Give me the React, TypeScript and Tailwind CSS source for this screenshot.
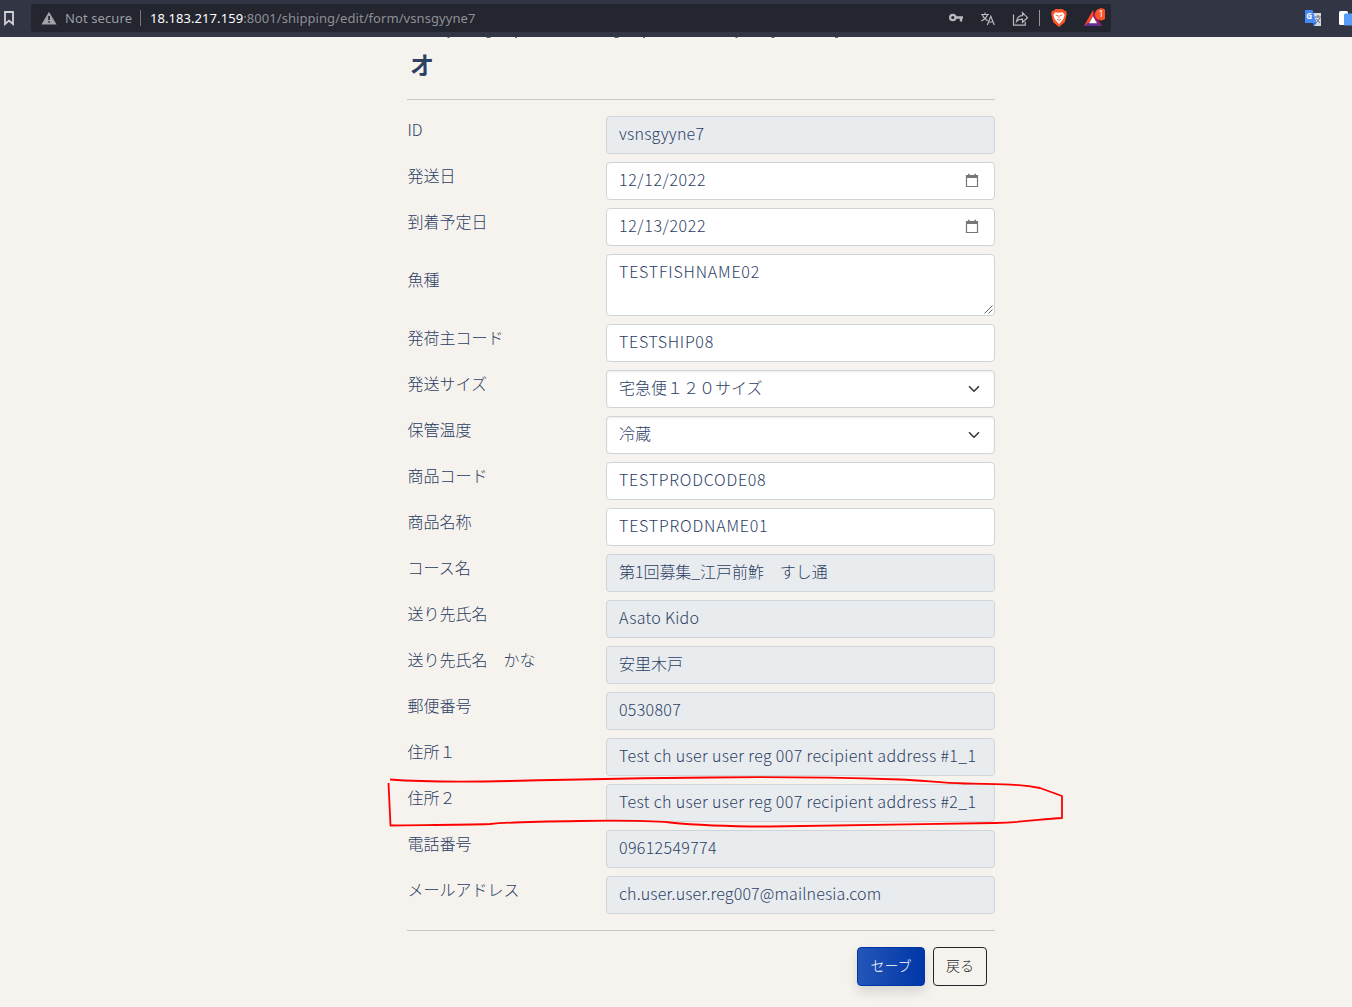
import React from 'react';

type Kind = 'text' | 'date' | 'area' | 'select';
type Field = { label: string; value: string; kind?: Kind; locked?: boolean; track?: string };

const fields: Field[] = [
  { label: 'ID', value: 'vsnsgyyne7', locked: true, track: 'tracking-[0.2px]' },
  { label: '発送日', value: '12/12/2022', kind: 'date' },
  { label: '到着予定日', value: '12/13/2022', kind: 'date' },
  { label: '魚種', value: 'TESTFISHNAME02', kind: 'area', track: 'tracking-[0.8px]' },
  { label: '発荷主コード', value: 'TESTSHIP08', track: 'tracking-[0.7px]' },
  { label: '発送サイズ', value: '宅急便１２０サイズ', kind: 'select', track: 'tracking-normal' },
  { label: '保管温度', value: '冷蔵', kind: 'select', track: 'tracking-normal' },
  { label: '商品コード', value: 'TESTPRODCODE08', track: 'tracking-[0.75px]' },
  { label: '商品名称', value: 'TESTPRODNAME01', track: 'tracking-[0.8px]' },
  { label: 'コース名', value: '第1回募集_江戸前鮓　すし通', locked: true, track: 'tracking-[-0.06px]' },
  { label: '送り先氏名', value: 'Asato Kido', locked: true, track: 'tracking-[0.3px]' },
  { label: '送り先氏名　かな', value: '安里木戸', locked: true, track: 'tracking-normal' },
  { label: '郵便番号', value: '0530807', locked: true, track: 'tracking-[0.3px]' },
  { label: '住所１', value: 'Test ch user user reg 007 recipient address #1_1', locked: true, track: 'tracking-[0.35px]' },
  { label: '住所２', value: 'Test ch user user reg 007 recipient address #2_1', locked: true, track: 'tracking-[0.35px]' },
  { label: '電話番号', value: '09612549774', locked: true, track: 'tracking-[0.34px]' },
  { label: 'メールアドレス', value: 'ch.user.user.reg007@mailnesia.com', locked: true, track: 'tracking-[0.13px]' },
];

function BrowserBar() {
  return (
    <header className="relative z-10 flex h-[37px] items-start bg-[#323544] font-['Noto_Sans']">
      <svg className="ml-[3px] mt-[10px] shrink-0" width="12" height="16" viewBox="0 0 12 16" fill="none" stroke="#d2d2d4" strokeWidth="1.8">
        <path d="M2 2h8v12l-4-3.400L2 14z" />
      </svg>
      <div className="ml-4 mt-1 flex h-7 w-[1080px] shrink-0 items-center rounded-[3px] bg-[#23252f]">
        <svg className="ml-[10px]" width="16" height="14" viewBox="0 0 16 14">
          <path d="M8 .8 15.6 13.5H.4z" fill="#a0a2a8" />
          <path d="M7.2 5h1.7v4H7.2zM7.2 10.2h1.7v1.6H7.2z" fill="#23252f" />
        </svg>
        <span className="ml-2 w-[68px] whitespace-nowrap pt-px text-[13px] tracking-[0.1px] text-[#9b9da3]">Not secure</span>
        <span className="ml-[7px] h-4 w-px bg-[#75777e]" />
        <span className="ml-[9px] whitespace-nowrap pt-px text-[13px] tracking-[0.065px] text-[#8e9096]">
          <span className="text-white">18.183.217.159</span>:8001/shipping/edit/form/vsnsgyyne7
        </span>
        <div className="ml-auto flex items-center">
          <svg width="160" height="28" viewBox="945 4 160 28">
            <g fill="none" stroke="#b9babf">
              <circle cx="952.8" cy="17.5" r="2.7" strokeWidth="2.2" />
              <path d="M956 17.5h7M961 17.5v4" strokeWidth="2.4" />
              <path d="M981 14.5h8M985 12.5v2M982.4 14.5c.8 3 3 5 5.4 6.2M987.4 14.5c-.8 3-3 5-6.2 6.6" strokeWidth="1.1" />
              <path d="m987.3 25 3.500-8.700 3.500 8.700M988.6 22h4.400" strokeWidth="1.2" />
              <path d="M1013.5 14.500v10.700h11.700v-3.500" strokeWidth="1.2" />
              <path d="M1016.5 21.500c.6-4 3-5.800 6-5.800v-3l5 5-5 4.600v-3.200c-2.600 0-4.600.6-6 2.400z" strokeWidth="1.2" />
            </g>
            <path d="M1039.500 10v16" stroke="#94969c" />
            <path d="M1055.500 9h7l2 1.800 1.600-.1.700 3.300-2 8.200-5.800 4.800-5.800-4.800-2-8.200.7-3.300 1.600.1z" fill="#fb542b" />
            <path d="m1055.300 12.200 3.700.5 3.700-.5 2 2.800-1.600 4.500-4.100 4.500-4.100-4.500-1.600-4.500z" fill="#fff" />
            <path d="m1055.700 15 2.300.8M1062.300 15l-2.300.8M1059 15.500v3m-2 .6 2 1.400 2-1.400" stroke="#fb542b" strokeWidth=".9" fill="none" />
            <path d="M1093 10v6l-5 8.500-4 1.500z" fill="#ff4724" />
            <path d="m1093 10 9 16-5-2-4-8z" fill="#9e1f63" />
            <path d="M1084 26h18l-5-3.200h-9z" fill="#662d91" />
            <path d="m1093 16.200 4 7h-8z" fill="#fff" />
            <circle cx="1101" cy="14.300" r="6.100" fill="#fb542b" />
            <text x="1101" y="17.400" fontSize="9" textAnchor="middle" fill="#fff">1</text>
          </svg>
          <span className="w-[6px]" />
        </div>
      </div>
      <svg className="ml-auto" width="52" height="37" viewBox="1300 0 52 37">
        <path d="M1310 13h11v13h-7z" fill="#d5d8dc" />
        <path d="M1315 17h6M1318 15v2M1316 23l4-5M1316.500 19l3.500 4" stroke="#63717c" strokeWidth="1" />
        <path d="M1305 10h7.500l4 13H1305z" fill="#4688f4" />
        <path d="M1312.500 23h4l-2.500 3z" fill="#3267d6" />
        <text x="1306.300" y="19" fontSize="8" fontWeight="700" fill="#fff">G</text>
        <rect x="1339" y="11" width="9" height="14" rx="1.5" fill="#fff" />
        <rect x="1344" y="13.500" width="9" height="12" rx="1.5" fill="#559df6" />
      </svg>
    </header>
  );
}

function Control({ value, kind = 'text', locked, track = 'tracking-[0.6px]' }: Field) {
  const base = 'flex w-[389px] shrink-0 rounded-[4px] border border-[#ced4da] pl-3 pr-[14px] text-base leading-6 whitespace-nowrap';
  return (
    <div
      className={`${base} ${track} ${kind === 'area' ? 'relative h-[62px] items-start pt-1' : 'h-[38px] items-center pb-1'} ${locked ? 'bg-[#e9ecef]' : 'bg-white'} ${kind === 'select' ? 'shadow-[inset_0_1px_2px_rgba(0,0,0,0.08)]' : ''}`}
    >
      <span>{value}</span>
      {kind === 'date' && (
        <svg className="ml-auto mt-[2px] mr-px" width="14" height="15" viewBox="0 0 14 15">
          <path d="M1.500 2.500h11v11h-11z" fill="none" stroke="#777" strokeWidth="1.2" />
          <path d="M1 2h12v3H1zM3 .7h1.500V3H3zM9.500.7H11V3H9.500z" fill="#777" />
        </svg>
      )}
      {kind === 'select' && (
        <svg className="ml-auto mt-1" width="12" height="12" viewBox="0 0 16 16" fill="none" stroke="#343a40" strokeWidth="2.2" strokeLinecap="round" strokeLinejoin="round">
          <path d="m2 5 6 6 6-6" />
        </svg>
      )}
      {kind === 'area' && (
        <svg className="absolute bottom-px right-px" width="9" height="9" viewBox="0 0 9 9" stroke="#555" strokeWidth="0.9">
          <path d="M.5 8.500 8.500.5M4.500 8.500l4-4" />
        </svg>
      )}
    </div>
  );
}

export default function App() {
  return (
    <div className="relative h-[1007px] w-[1352px] overflow-hidden bg-[#f6f3ee]">
      <BrowserBar />
      <main className="ml-[407px] w-[588px] font-['Noto_Sans_CJK_JP',sans-serif] font-light text-[#2c4064]">
        {/* tails of the heading line that is scrolled under the toolbar */}
        <svg className="block" width="588" height="1" stroke="#2c4064" strokeWidth="1" opacity="0.8">
          <path d="M40.500.5h2M79.500.5h4M108 .5h2M207.500.5h4M236 .5h2M328.500.5h2M364.500.5h3M428 .5h3" />
        </svg>
        <h1 className="flex h-[62px] items-start border-b border-[#c5c8cc] pl-[3px] pt-2 text-2xl font-bold leading-9">オ</h1>
        <form className="flex flex-col gap-2 pt-4">
          {fields.map((f) => (
            <div key={f.label} className="flex justify-between">
              <div className={`pl-[0.5px] text-base leading-6 ${f.kind === 'area' ? 'pt-[13px]' : 'pt-px'}`}>{f.label}</div>
              <Control {...f} />
            </div>
          ))}
        </form>
        <div className="mt-4 flex justify-end gap-2 border-t border-[#c5c8cc] pr-2 pt-4 text-sm">
          <button type="button" className="h-[39px] w-[68px] rounded-[4px] border border-[#0036a8] bg-linear-to-r from-[#2456b8] to-[#0036a8] pb-1 text-white shadow-[0_6px_12px_rgba(0,0,0,0.12)]">セーブ</button>
          <button type="button" className="h-[39px] w-[54px] rounded-[4px] border border-[#212529] pb-1 text-[#212529]">戻る</button>
        </div>
      </main>
      <svg className="pointer-events-none absolute left-0 top-0 z-20" width="1352" height="1007" fill="none" stroke="#fe0000" strokeWidth="1.8" strokeLinejoin="round">
        <path d="M390 779.500C410 781 460 782 510 781C570 779.500 640 778 710 777.500C780 776.500 850 778 900 779.500C925 780.500 940 783 965 783.500C1000 784 1020 784 1040 788L1062 796V818C1040 819 1030 822 995 823C920 824 860 825.500 770 826.500C720 826.500 700 825.500 670 822.500C640 820 610 820.500 580 821C540 821.500 510 822 490 824C460 825 420 825 390.500 825.500L388.500 783" />
      </svg>
    </div>
  );
}
